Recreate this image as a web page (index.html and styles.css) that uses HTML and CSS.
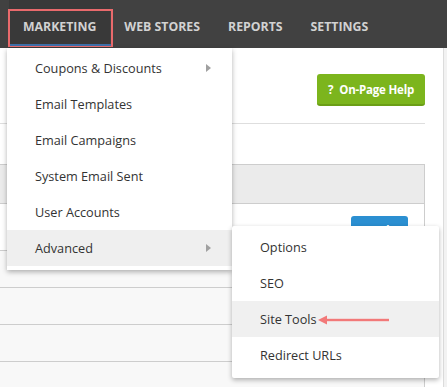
FILE: index.html
```html
<!DOCTYPE html>
<html lang="en">
<head>
    <meta charset="UTF-8">
    <title>Marketing Menu</title>
    <link rel="stylesheet" href="styles.css">
</head>
<body>
    <header class="topnav">
        <div class="nav-item active">
            Marketing
            <ul class="dropdown">
                <li class="has-sub">Coupons &amp; Discounts</li>
                <li>Email Templates</li>
                <li>Email Campaigns</li>
                <li>System Email Sent</li>
                <li>User Accounts</li>
                <li class="has-sub open">Advanced
                    <ul class="submenu">
                        <li>Options</li>
                        <li>SEO</li>
                        <li class="hover">Site Tools
                            <svg class="pointer" width="76" height="12" viewBox="0 0 76 12">
                                <path d="M2 6 L11 1.5 L11 10.5 Z" fill="#f27979"/>
                                <rect x="9" y="4.8" width="64" height="2.4" fill="#f27979"/>
                            </svg>
                        </li>
                        <li>Redirect URLs</li>
                    </ul>
                </li>
            </ul>
        </div>
        <div class="nav-item">Web Stores</div>
        <div class="nav-item">Reports</div>
        <div class="nav-item">Settings</div>
    </header>

    <div class="page">
        <div class="panel">
            <div class="toolbar">
                <button class="help-btn"><span class="q">?</span>On-Page Help</button>
            </div>
            <div class="table">
                <div class="thead"></div>
                <div class="row first">
                    <button class="apply-btn">Apply</button>
                </div>
                <div class="row"></div>
                <div class="row"></div>
                <div class="row"></div>
                <div class="row"></div>
            </div>
        </div>
        <div class="side"></div>
    </div>
</body>
</html>
```

FILE: styles.css
```css
body {
    margin: 0;
    padding: 0;
    font-family: 'Open Sans', 'Liberation Sans', sans-serif;
    background: #f3f3f3;
    overflow: hidden;
}
ul {
    list-style: none;
    margin: 0;
    padding: 0;
}

/* Top navigation */
.topnav {
    position: relative;
    z-index: 5;
    display: flex;
    height: 48px;
    padding-left: 9px;
    background: #414141;
}
.nav-item {
    position: relative;
    display: flex;
    align-items: center;
    padding: 5px 14px 0 14px;
    color: #d2d2d2;
    font-size: 12.3px;
    font-weight: 700;
    text-transform: uppercase;
}
.nav-item.active {
    background: #393939;
}
.nav-item.active:before {
    position: absolute;
    content: "";
    left: -1px; right: -3px; top: 9px; bottom: 1px;
    border: 2px solid #e96a6c;
    border-bottom-width: 1px;
    box-shadow: inset 0 -2px 0 #3d6fa8;
}

/* Dropdown */
.dropdown {
    position: absolute;
    top: 48px;
    left: -2px;
    width: 225px;
    padding: 2px 0 4px 0;
    background: #fff;
    box-shadow: 0 2px 5px rgba(0,0,0,0.3);
    text-transform: none;
    font-weight: 400;
}
.dropdown li {
    position: relative;
    height: 36px;
    line-height: 36px;
    padding-left: 28px;
    color: #333;
    font-size: 12.7px;
}
.dropdown li.has-sub:after {
    position: absolute;
    content: "";
    right: 21px;
    top: 14px;
    border-left: 5px solid #a0a0a0;
    border-top: 4px solid transparent;
    border-bottom: 4px solid transparent;
}
.dropdown li.open {
    background: #efefef;
}
.submenu {
    position: absolute;
    top: -4px;
    left: 225px;
    width: 207px;
    padding: 3px 0 5px 0;
    background: #fff;
    box-shadow: 0 2px 5px rgba(0,0,0,0.3);
    border-radius: 2px;
}
.submenu li {
    line-height: 37px;
}
.submenu li.hover {
    background: #f0f0f0;
}
.pointer {
    position: absolute;
    left: 84px;
    top: 13px;
}

/* Page content */
.page {
    display: flex;
    height: 339px;
}
.panel {
    width: 425px;
    padding-right: 18px;
    background: #fff;
    border-right: 1px solid #dcdcdc;
}
.side {
    flex: 1;
    background: #f2f2f2;
}
.toolbar {
    display: flex;
    justify-content: flex-end;
    height: 75px;
    border-bottom: 1px solid #dedede;
}
.help-btn {
    margin-top: 26px;
    width: 108px;
    height: 32px;
    border: none;
    border-bottom: 2px solid #6b9e16;
    border-radius: 3px;
    background: #7cb51d;
    color: #fff;
    font-family: 'Open Sans', sans-serif;
    font-size: 11.5px;
    font-weight: 700;
    letter-spacing: -0.2px;
    padding: 0;
}
.help-btn .q {
    margin-right: 6px;
}
.table {
    margin-top: 40px;
    border-right: 1px solid #cdcdcd;
}
.thead {
    height: 38px;
    background: #ebebeb;
    border-top: 1px solid #cdcdcd;
    border-bottom: 1px solid #cdcdcd;
}
.row {
    height: 36px;
    background: #f8f8f8;
    border-bottom: 1px solid #cdcdcd;
}
.row.first {
    display: flex;
    justify-content: flex-end;
    height: 46px;
    background: #fff;
}
.apply-btn {
    margin: 12px 16px 0 0;
    width: 57px;
    height: 28px;
    border: none;
    border-radius: 3px;
    background: #2b8fd1;
    color: #fff;
    font-family: 'Open Sans', sans-serif;
    font-size: 12px;
    font-weight: 700;
}
```
